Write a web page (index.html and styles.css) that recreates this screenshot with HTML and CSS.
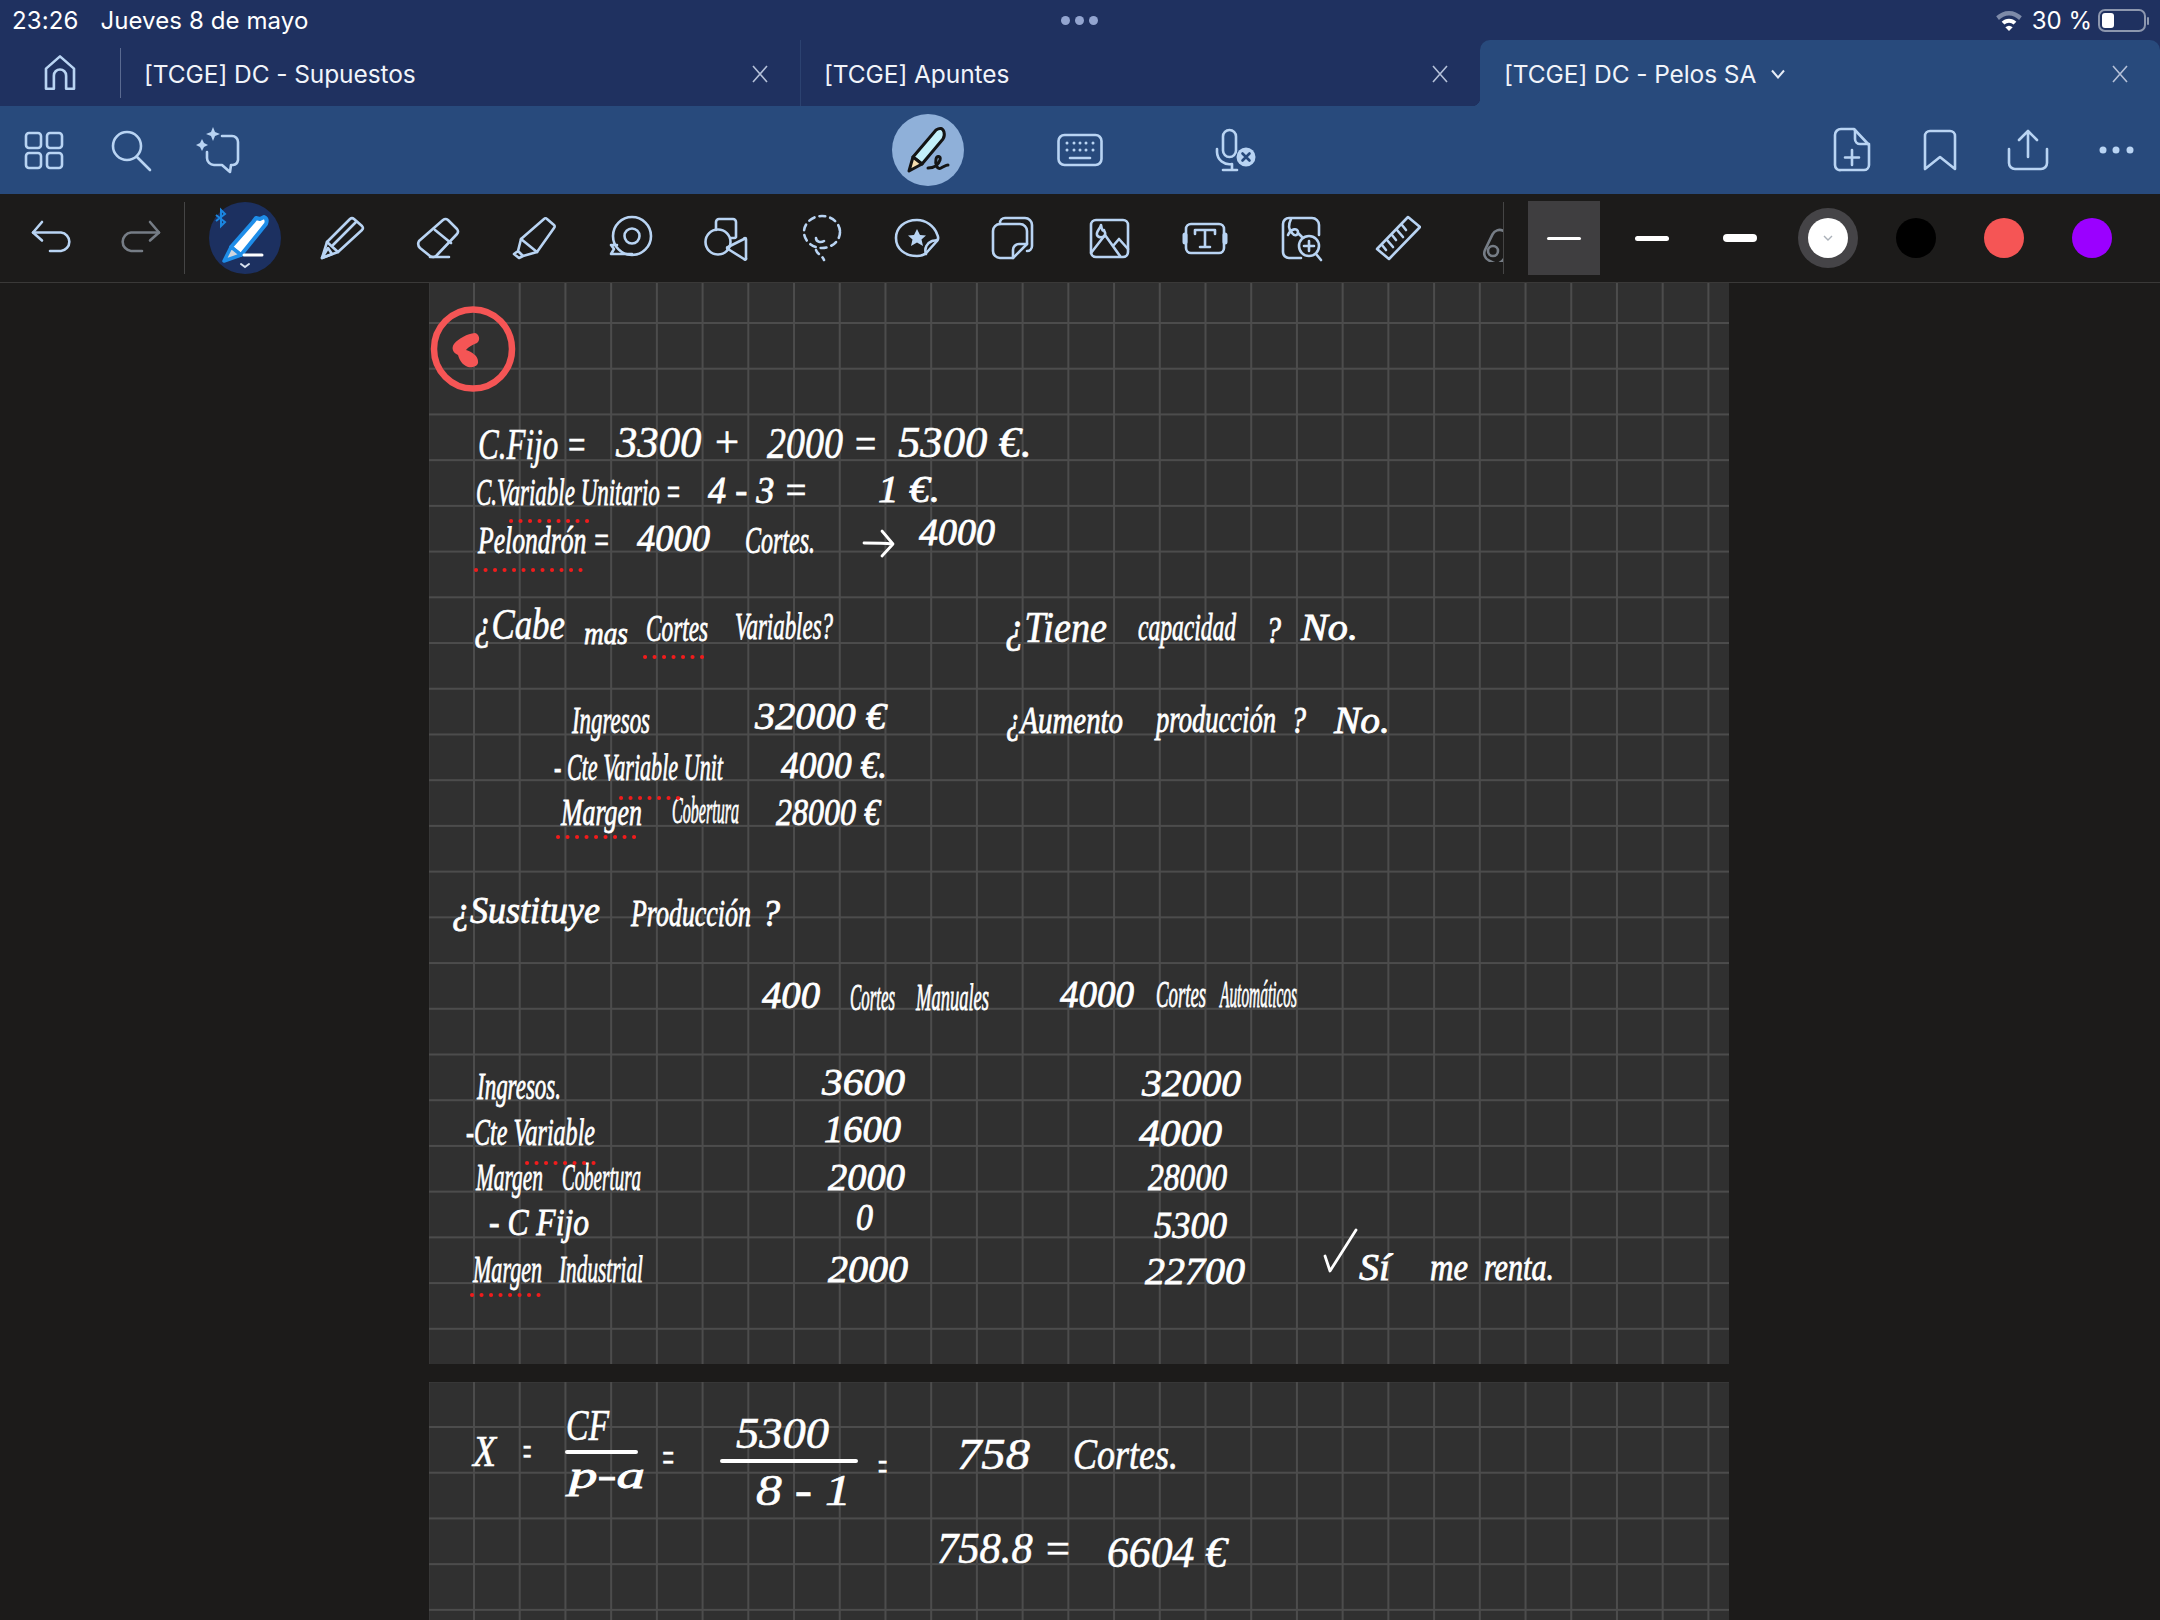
FILE: index.html
```html
<!DOCTYPE html>
<html lang="es">
<head>
<meta charset="utf-8">
<title>[TCGE] DC - Pelos SA</title>
<link rel="stylesheet" href="styles.css">
</head>
<body>
<div class="app">
  <header class="status">
    <div class="status-left"><span>23:26</span><span>Jueves 8 de mayo</span></div>
    <div class="status-dots"><i></i><i></i><i></i></div>
    <div class="status-right">
      <svg class="wifi" viewBox="0 0 30 24"><path class="wifi-dim" d="M1 8a20 20 0 0 1 28 0l-3 4a15 15 0 0 0-22 0z"/><path d="M7 14a11 11 0 0 1 16 0l-3 3a7 7 0 0 0-10 0z"/><path d="M15 24l-4-4a6 6 0 0 1 8 0z"/></svg>
      <span>30 %</span>
      <div class="battery"><div class="battery-fill"></div></div>
    </div>
  </header>

  <nav class="tabs">
    <div class="home">
      <svg class="ic home-ic" viewBox="0 0 48 48"><path d="M8 42V19L24 5l16 14v23h-9V27a7 7 0 0 0-14 0v15z"/></svg>
    </div>
    <div class="tab tab-first"><span class="tab-title">[TCGE] DC - Supuestos</span>
      <svg class="close" viewBox="0 0 16 20"><path d="M1 2l14 16M15 2L1 18"/></svg></div>
    <div class="tab tab-second"><span class="tab-title">[TCGE] Apuntes</span>
      <svg class="close" viewBox="0 0 16 20"><path d="M1 2l14 16M15 2L1 18"/></svg></div>
    <div class="tab tab-active"><span class="tab-title">[TCGE] DC - Pelos SA</span>
      <svg class="caret" viewBox="0 0 16 10"><path d="M2 1.5l6 7 6-7"/></svg>
      <svg class="close" viewBox="0 0 16 20"><path d="M1 2l14 16M15 2L1 18"/></svg></div>
  </nav>

  <section class="toolbar">
    <div class="tb-group">
      <div class="cell"><svg class="ic" viewBox="0 0 48 48"><rect x="6" y="7" width="15" height="15" rx="3"/><rect x="27" y="7" width="15" height="15" rx="3"/><rect x="6" y="27" width="15" height="15" rx="3"/><rect x="27" y="27" width="15" height="15" rx="3"/></svg></div>
      <div class="cell"><svg class="ic" viewBox="0 0 48 48"><circle cx="19" cy="20" r="14"/><path d="M29 31l13 13"/></svg></div>
      <div class="cell"><svg class="ic" viewBox="0 0 48 48"><path d="M26 10h10a6 6 0 0 1 6 6v18a6 6 0 0 1-5 5h-2l-1 7-8-7h-8a7 7 0 0 1-7-7v-6"/><path class="solid" d="M17 1l2 5 5 2-5 2-2 5-2-5-5-2 5-2zM6 13l2 4 4 2-4 2-2 4-2-4-4-2 4-2z"/></svg></div>
    </div>
    <div class="tb-center">
      <div class="cell-wide cell-pen"><div class="mode-pen">
        <svg class="pen-art" viewBox="0 0 72 72"><path class="pen-body" d="M44 16q6-4 8 2 1 4-1 7L30 50l-9-7z"/><path class="pen-tip" d="M21 43l-4 14 13-7z"/><path class="pen-scrib" d="M36 54c5 0 10-2 12-8 1-4-3-5-4-1-1 5 1 11 5 9s5-3 7-3"/></svg>
      </div></div>
      <div class="cell-wide"><svg class="ic" viewBox="0 0 48 48"><rect x="2.500" y="9" width="43" height="30" rx="6"/><path class="dots" d="M11 17h.01M18 17h.01M24 17h.01M30 17h.01M37 17h.01M11 24h.01M18 24h.01M24 24h.01M30 24h.01M37 24h.01"/><path d="M14 32h20"/></svg></div>
      <div class="cell-wide"><svg class="ic" viewBox="0 0 48 48"><rect x="11" y="4" width="13" height="27" rx="6.500"/><path d="M5 23v3a12.500 12.500 0 0 0 15 12v5"/><path d="M11 44h14"/><circle class="solid" cx="34" cy="31" r="9.500"/><path class="x-mark" d="M30.500 27.500l7 7M37.500 27.500l-7 7"/></svg></div>
    </div>
    <div class="tb-group tb-right">
      <div class="cell"><svg class="ic" viewBox="0 0 48 48"><path d="M13 3h13l15 16v20a5 5 0 0 1-5 5H13a5 5 0 0 1-6-5V9a6 6 0 0 1 6-6z"/><path d="M27 4v9a5 5 0 0 0 5 5h9"/><path d="M24 24v15M17 31.500h14"/></svg></div>
      <div class="cell"><svg class="ic" viewBox="0 0 48 48"><path d="M9 43V10a5 5 0 0 1 5-5h20a5 5 0 0 1 5 5v33L24 31z"/></svg></div>
      <div class="cell"><svg class="ic" viewBox="0 0 48 48"><path d="M24 31V6M15 14l9-9 9 9"/><path d="M5 23v14a6 6 0 0 0 6 6h26a6 6 0 0 0 6-6V23"/></svg></div>
      <div class="cell"><svg class="ic more" viewBox="0 0 48 48"><circle class="solid" cx="11" cy="24" r="3.500"/><circle class="solid" cx="24" cy="24" r="3.500"/><circle class="solid" cx="38" cy="24" r="3.500"/></svg></div>
    </div>
  </section>

  <section class="tools">
    <div class="cell"><svg class="ic" viewBox="0 0 48 48"><path d="M14 8L5 18.500l9 8"/><path d="M5 18.500h28a9.300 9.300 0 0 1 0 18.500H22"/></svg></div>
    <div class="cell"><svg class="ic ic-dim" viewBox="0 0 48 48"><path d="M34 8l9 10.500-9 8"/><path d="M43 18.500H15a9.300 9.300 0 0 0 0 18.500h11"/></svg></div>
    <div class="vline"></div>
    <div class="tool-strip">
      <div class="tool"><div class="pen-active">
        <svg class="pen-art" viewBox="0 0 72 72">
          <path class="bt" d="M7 13l9 7-4 4V8l4 4-9 7"/>
          <path class="blue-body" d="M44 20l3-4 4 1 4-2q4 2 2 7L32 53l-10-8z"/>
          <path class="blue-tip" d="M22 45l-7 14 17-6z"/>
          <path class="white-dash" d="M35 53h18"/>
          <path class="white-chev" d="M32 62l4 3 4-3"/>
        </svg>
      </div></div>
      <div class="tool"><svg class="ic" viewBox="0 0 48 48"><path d="M5 44l5-16L33 5a3 3 0 0 1 4 0l8 7a3 3 0 0 1 0 4L21 38z"/><path d="M10 28l11 10M16 31L39 8M5 44l6-10 4 6z"/></svg></div>
      <div class="tool"><svg class="ic" viewBox="0 0 48 48"><path d="M30 6a4 4 0 0 1 5 0l9 9a4 4 0 0 1 0 5L24 41a5 5 0 0 1-7 1l-10-8a6 6 0 0 1-1-7z"/><path d="M22 16l16 13M17 43h19"/></svg></div>
      <div class="tool"><svg class="ic" viewBox="0 0 48 48"><path d="M12 25L35 5a2 2 0 0 1 3 0l7 6a2 2 0 0 1 0 3L28 38z"/><path d="M12 25l-3 12 5 5 14-4M9 37l-4 3 5 4 4-2"/></svg></div>
      <div class="tool"><svg class="ic" viewBox="0 0 48 48"><circle cx="27" cy="22" r="19"/><circle cx="27" cy="22" r="7.500"/><path d="M12 31H6l3 4-3 5h21"/></svg></div>
      <div class="tool"><svg class="ic" viewBox="0 0 48 48"><path d="M15 16V8a3 3 0 0 1 3-3h14a3 3 0 0 1 3 3v15a2 2 0 0 1-2 1h-3"/><circle cx="17" cy="28" r="12.500"/><path d="M45 25v19a1 1 0 0 1-2 1L27 35a1 1 0 0 1 0-2l16-8a1 1 0 0 1 2 0z"/></svg></div>
      <div class="tool"><svg class="ic" viewBox="0 0 48 48"><ellipse class="dash" cx="25" cy="18" rx="18" ry="16"/><path d="M19 24c0 4 5 5 8 3"/><path class="dash-sm" d="M19 36c1 4 6 5 8 10"/></svg></div>
      <div class="tool"><svg class="ic" viewBox="0 0 48 48"><path d="M24 6C11 6 3 14 3 24c0 11 9 18 21 18 4 0 8-1 11-5l9-10c2-2 1-5 0-7-3-8-11-14-20-14z"/><path d="M33 40c-2-6 1-11 6-13 2-1 4 0 5-1"/><path class="solid" d="M24 15l3 6 6 .5-4.500 4 1.500 6.500-6-3.500-6 3.500 1.500-6.500-4.500-4 6-.5z"/></svg></div>
      <div class="tool"><svg class="ic" viewBox="0 0 48 48"><path d="M4 17a7 7 0 0 1 7-7h20a7 7 0 0 1 7 7v13L24 44H11a7 7 0 0 1-7-7z"/><path d="M24 44v-8a6 6 0 0 1 6-6h8"/><path d="M11 10V9a5 5 0 0 1 5-5h20a7 7 0 0 1 7 7v21a5 5 0 0 1-5 5"/></svg></div>
      <div class="tool"><svg class="ic" viewBox="0 0 48 48"><rect x="6" y="6" width="37" height="37" rx="5"/><path d="M6 39l14-18 15 21M28 32l6-7 9 10"/><path d="M16 11c-1 4-5 6-4 10 1 3 7 3 8 0 1-3-1-3-1-5-1 1-2 1-3-5z"/></svg></div>
      <div class="tool"><svg class="ic" viewBox="0 0 48 48"><rect x="5" y="10" width="38" height="29" rx="5"/><path d="M14 20v-4h20v4M24 16v17M19 33h10"/><path class="pill" d="M4 21v7M44 21v7"/></svg></div>
      <div class="tool"><svg class="ic" viewBox="0 0 48 48"><path d="M42 21V11a7 7 0 0 0-7-7H12a6 6 0 0 0-6 6v28a6 6 0 0 0 6 6h12"/><path d="M14 5c-3 6-2 11 1 14 3 4 6 2 6-1 0-4-7-4-10 3M21 19l4 4"/><circle cx="32" cy="32" r="10"/><path d="M32 27v10M27 32h10M39 40l5 6"/></svg></div>
      <div class="tool"><svg class="ic" viewBox="0 0 48 48"><path d="M35 3l12 10-31 32-12-10z"/><path d="M29 11l4 5M24 16l6 7M19 21l4 5M14 26l6 7M9 31l4 5"/></svg></div>
      <div class="tool"><svg class="ic ic-dim" viewBox="0 0 48 48"><rect x="19" y="16" width="21" height="33" rx="8" transform="rotate(26 29 32)"/><circle cx="24" cy="37" r="5"/><path d="M44 15h.01M46 9h.01"/></svg></div>
    </div>
    <div class="vline"></div>
    <div class="sizes">
      <div class="swatch swatch-on"><span class="stroke s1"></span></div>
      <div class="swatch"><span class="stroke s2"></span></div>
      <div class="swatch"><span class="stroke s3"></span></div>
      <div class="swatch"><div class="ring"><div class="dot dot-white"><svg class="chev" viewBox="0 0 12 8"><path d="M2 2l4 4 4-4"/></svg></div></div></div>
      <div class="swatch"><div class="dot dot-black"></div></div>
      <div class="swatch"><div class="dot dot-red"></div></div>
      <div class="swatch"><div class="dot dot-purple"></div></div>
    </div>
  </section>

  <main class="doc">
    <article class="page page-one">
      <svg class="ink" viewBox="429 283 1300 1081">
        <ellipse class="red-ring" cx="473" cy="349" rx="39" ry="39.500"/>
        <path class="red-blob" d="M475 333c4 1 6 7 2 10-5 2-9 4-11 7 6 2 12 6 12 11 1 5-5 7-10 6-6-2-9-8-10-12-5-2-7-7-4-11 5-6 13-10 21-11z"/>

        <g class="hw xl">
          <text x="478" y="459" textLength="109" lengthAdjust="spacingAndGlyphs">C.Fijo =</text>
          <text x="616" y="457" textLength="125" lengthAdjust="spacingAndGlyphs">3300 +</text>
          <text x="767" y="458" textLength="111" lengthAdjust="spacingAndGlyphs">2000 =</text>
          <text x="898" y="457" textLength="134" lengthAdjust="spacingAndGlyphs">5300 €.</text>
          <text x="474" y="639" textLength="91" lengthAdjust="spacingAndGlyphs">¿Cabe</text>
          <text x="1005" y="642" textLength="102" lengthAdjust="spacingAndGlyphs">¿Tiene</text>
        </g>
        <g class="hw lg">
          <text x="476" y="505" textLength="205" lengthAdjust="spacingAndGlyphs">C.Variable Unitario =</text>
          <text x="708" y="503" textLength="100" lengthAdjust="spacingAndGlyphs">4 - 3 =</text>
          <text x="878" y="502" textLength="62" lengthAdjust="spacingAndGlyphs">1 €.</text>
          <text x="478" y="553" textLength="132" lengthAdjust="spacingAndGlyphs">Pelondrón =</text>
          <text x="637" y="551" textLength="73" lengthAdjust="spacingAndGlyphs">4000</text>
          <text x="745" y="553" textLength="70" lengthAdjust="spacingAndGlyphs">Cortes.</text>
          <text x="919" y="545" textLength="76" lengthAdjust="spacingAndGlyphs">4000</text>
          <text x="646" y="641" textLength="62" lengthAdjust="spacingAndGlyphs">Cortes</text>
          <text x="735" y="639" textLength="98" lengthAdjust="spacingAndGlyphs">Variables?</text>
          <text x="1138" y="640" textLength="98" lengthAdjust="spacingAndGlyphs">capacidad</text>
          <text x="1266" y="643" textLength="15" lengthAdjust="spacingAndGlyphs">?</text>
          <text x="1301" y="640" textLength="57" lengthAdjust="spacingAndGlyphs">No.</text>
          <text x="1006" y="733" textLength="117" lengthAdjust="spacingAndGlyphs">¿Aumento</text>
          <text x="1156" y="732" textLength="120" lengthAdjust="spacingAndGlyphs">producción</text>
          <text x="1291" y="733" textLength="15" lengthAdjust="spacingAndGlyphs">?</text>
          <text x="1334" y="733" textLength="56" lengthAdjust="spacingAndGlyphs">No.</text>
          <text x="572" y="733" textLength="78" lengthAdjust="spacingAndGlyphs">Ingresos</text>
          <text x="755" y="729" textLength="131" lengthAdjust="spacingAndGlyphs">32000 €</text>
          <text x="554" y="780" textLength="169" lengthAdjust="spacingAndGlyphs">- Cte Variable Unit</text>
          <text x="781" y="778" textLength="106" lengthAdjust="spacingAndGlyphs">4000 €.</text>
          <text x="561" y="825" textLength="81" lengthAdjust="spacingAndGlyphs">Margen</text>
          <text x="672" y="823" textLength="67" lengthAdjust="spacingAndGlyphs">Cobertura</text>
          <text x="776" y="825" textLength="104" lengthAdjust="spacingAndGlyphs">28000 €</text>
          <text x="452" y="923" textLength="148" lengthAdjust="spacingAndGlyphs">¿Sustituye</text>
          <text x="631" y="926" textLength="120" lengthAdjust="spacingAndGlyphs">Producción</text>
          <text x="762" y="926" textLength="18" lengthAdjust="spacingAndGlyphs">?</text>
          <text x="762" y="1008" textLength="58" lengthAdjust="spacingAndGlyphs">400</text>
          <text x="850" y="1010" textLength="45" lengthAdjust="spacingAndGlyphs">Cortes</text>
          <text x="916" y="1010" textLength="73" lengthAdjust="spacingAndGlyphs">Manuales</text>
          <text x="1060" y="1007" textLength="74" lengthAdjust="spacingAndGlyphs">4000</text>
          <text x="1156" y="1007" textLength="50" lengthAdjust="spacingAndGlyphs">Cortes</text>
          <text x="1220" y="1007" textLength="77" lengthAdjust="spacingAndGlyphs">Automáticos</text>
          <text x="477" y="1099" textLength="84" lengthAdjust="spacingAndGlyphs">Ingresos.</text>
          <text x="822" y="1095" textLength="83" lengthAdjust="spacingAndGlyphs">3600</text>
          <text x="1142" y="1096" textLength="99" lengthAdjust="spacingAndGlyphs">32000</text>
          <text x="466" y="1145" textLength="129" lengthAdjust="spacingAndGlyphs">-Cte Variable</text>
          <text x="824" y="1142" textLength="77" lengthAdjust="spacingAndGlyphs">1600</text>
          <text x="1139" y="1146" textLength="83" lengthAdjust="spacingAndGlyphs">4000</text>
          <text x="476" y="1190" textLength="67" lengthAdjust="spacingAndGlyphs">Margen</text>
          <text x="562" y="1190" textLength="79" lengthAdjust="spacingAndGlyphs">Cobertura</text>
          <text x="828" y="1190" textLength="77" lengthAdjust="spacingAndGlyphs">2000</text>
          <text x="1148" y="1190" textLength="79" lengthAdjust="spacingAndGlyphs">28000</text>
          <text x="489" y="1235" textLength="100" lengthAdjust="spacingAndGlyphs">- C Fijo</text>
          <text x="856" y="1230" textLength="17" lengthAdjust="spacingAndGlyphs">0</text>
          <text x="1154" y="1238" textLength="73" lengthAdjust="spacingAndGlyphs">5300</text>
          <text x="473" y="1282" textLength="69" lengthAdjust="spacingAndGlyphs">Margen</text>
          <text x="559" y="1282" textLength="84" lengthAdjust="spacingAndGlyphs">Industrial</text>
          <text x="828" y="1282" textLength="80" lengthAdjust="spacingAndGlyphs">2000</text>
          <text x="1145" y="1284" textLength="100" lengthAdjust="spacingAndGlyphs">22700</text>
          <text x="1359" y="1280" textLength="31" lengthAdjust="spacingAndGlyphs">Sí</text>
          <text x="1430" y="1280" textLength="38" lengthAdjust="spacingAndGlyphs">me</text>
          <text x="1484" y="1280" textLength="70" lengthAdjust="spacingAndGlyphs">renta.</text>
        </g>
        <g class="hw md">
          <text x="584" y="644" textLength="44" lengthAdjust="spacingAndGlyphs">mas</text>
        </g>
        <path class="pen-line" d="M864 543c10 0 20 0 28 1M882 531l11 13-11 12"/>
        <path class="pen-line" d="M1325 1256l5 15 26-41"/>
        <path class="red-dots" d="M511 521H590M476 570H583M645 657H704M621 798H681M558 837H636M527 1163H596M472 1295H540"/>
      </svg>
    </article>
    <article class="page page-two">
      <svg class="ink" viewBox="429 1382 1300 238">
        <g class="hw xl">
          <text x="473" y="1466" textLength="23" lengthAdjust="spacingAndGlyphs">X</text>
          <text x="522" y="1466" textLength="10" lengthAdjust="spacingAndGlyphs">=</text>
          <text x="566" y="1440" textLength="43" lengthAdjust="spacingAndGlyphs">CF</text>
          <text x="661" y="1472" textLength="14" lengthAdjust="spacingAndGlyphs">=</text>
          <text x="736" y="1448" textLength="93" lengthAdjust="spacingAndGlyphs">5300</text>
          <text x="756" y="1505" textLength="95" lengthAdjust="spacingAndGlyphs">8 - 1</text>
          <text x="877" y="1481" textLength="11" lengthAdjust="spacingAndGlyphs">=</text>
          <text x="957" y="1469" textLength="73" lengthAdjust="spacingAndGlyphs">758</text>
          <text x="1073" y="1469" textLength="105" lengthAdjust="spacingAndGlyphs">Cortes.</text>
          <text x="937" y="1563" textLength="135" lengthAdjust="spacingAndGlyphs">758.8 =</text>
          <text x="1107" y="1567" textLength="120" lengthAdjust="spacingAndGlyphs">6604 €</text>
        </g>
        <g class="hw lg">
          <text x="569" y="1488" textLength="76" lengthAdjust="spacingAndGlyphs">p-a</text>
        </g>
        <path class="pen-bar" d="M567 1452H636M722 1461H856"/>
      </svg>
    </article>
  </main>
</div>
</body>
</html>
```
FILE: styles.css
```css
* { box-sizing: border-box; }
html, body { margin: 0; padding: 0; }
body { width: 2160px; height: 1620px; overflow: hidden; background: #1c1b1a; font-family: Inter, "Liberation Sans", sans-serif; color: #fff; }
.app { width: 2160px; height: 1620px; display: flex; flex-direction: column; overflow: hidden; }

/* status bar */
.status { height: 40px; flex: none; background: #1f3160; display: grid; grid-template-columns: 1fr auto 1fr; align-items: center; padding: 0 14px 0 12px; font-size: 24px; }
.status-left { display: flex; gap: 22px; letter-spacing: .1px; }
.status-dots { display: flex; gap: 5px; }
.status-dots i { width: 9px; height: 9px; border-radius: 50%; background: #93a5d0; }
.status-right { display: flex; justify-content: flex-end; align-items: center; gap: 6px; }
.wifi { width: 30px; height: 22px; fill: #fff; margin-right: 2px; }
.wifi-dim { fill: #7d8aa8; }
.battery { width: 48px; height: 23px; border: 2px solid #8d97ae; border-radius: 7px; padding: 2px; position: relative; }
.battery::after { content: ""; position: absolute; right: -5px; top: 6px; width: 2px; height: 8px; background: #8d97ae; border-radius: 1px; }
.battery-fill { width: 12px; height: 100%; background: #fff; border-radius: 3px; }

/* shared icon */
.ic { width: 48px; height: 48px; fill: none; stroke: #b9d4f3; stroke-width: 2.600; stroke-linecap: round; stroke-linejoin: round; flex: none; }
.ic .solid { fill: #b9d4f3; stroke: none; }
.ic .dots { stroke-width: 3; }
.ic .x-mark { stroke: #284a7c; stroke-width: 2.600; }
.ic .pill { stroke-width: 5; }
.ic .dash { stroke-dasharray: 6 5; }
.ic .dash-sm { stroke-dasharray: 5 5; }
.ic-dim { stroke: #767d86; }

/* tabs */
.tabs { height: 66px; flex: none; background: #1f3160; display: flex; }
.home { width: 120px; display: flex; align-items: center; justify-content: center; }
.ic.home-ic { width: 42px; height: 42px; stroke-width: 3; }
.tab { width: 680px; height: 66px; display: flex; align-items: center; padding: 2px 32px 0 24px; position: relative; font-size: 24.500px; letter-spacing: -.1px; color: #f1f4fa; }
.tab-title { white-space: nowrap; }
.close { width: 16px; height: 20px; margin-left: auto; fill: none; stroke: #b4c0d8; stroke-width: 1.600; }
.caret { width: 16px; height: 10px; margin-left: 14px; fill: none; stroke: #e6ecf6; stroke-width: 2; }
.tab-first::before { content: ""; position: absolute; left: 0; top: 8px; bottom: 8px; width: 1px; background: #5a6a90; }
.tab-second { border-left: 1px solid #2c4270; padding-left: 23px; }
.tab-active { background: #284a7c; border-radius: 10px 10px 0 0; }
.tab-active::before { content: ""; position: absolute; left: -8px; bottom: 0; width: 8px; height: 8px; background: radial-gradient(circle at 0 0, #1f3160 8px, #284a7c 8.500px); }

/* toolbar */
.toolbar { height: 88px; flex: none; background: #284a7c; display: grid; grid-template-columns: 1fr auto 1fr; align-items: center; }
.tb-group { display: flex; }
.tb-right { justify-content: flex-end; }
.tb-center { display: flex; }
.cell { width: 88px; height: 88px; flex: none; display: flex; align-items: center; justify-content: center; }
.cell-wide { width: 156px; height: 88px; display: flex; align-items: center; justify-content: center; }
.cell-pen { padding-left: 8px; }
.mode-pen { width: 72px; height: 72px; border-radius: 50%; background: #8fb0d9; flex: none; }
.pen-art { width: 72px; height: 72px; display: block; }
.pen-body { fill: #c4f0fa; stroke: #141414; stroke-width: 3; stroke-linejoin: round; }
.pen-tip { fill: #f5deb0; stroke: #141414; stroke-width: 3; stroke-linejoin: round; }
.pen-scrib { fill: none; stroke: #141414; stroke-width: 3; stroke-linecap: round; }

/* tool row */
.tools { height: 89px; flex: none; background: #1c1b1a; border-bottom: 1px solid #3a3938; display: flex; align-items: center; padding-left: 8px; }
.vline { width: 1px; height: 72px; background: #454545; flex: none; }
.tool-strip { display: flex; width: 1306px; margin-left: 12px; overflow: hidden; flex: none; }
.tool { width: 96px; height: 72px; flex: none; display: flex; align-items: center; justify-content: center; }
.pen-active { width: 72px; height: 72px; border-radius: 50%; background: #1c3060; flex: none; }
.bt { fill: none; stroke: #1b86e0; stroke-width: 2; }
.blue-body { fill: #fff; stroke: #1e8de8; stroke-width: 4; stroke-linejoin: round; }
.blue-tip { fill: #cfd6de; stroke: #1e8de8; stroke-width: 3.500; stroke-linejoin: round; }
.white-dash { stroke: #fff; stroke-width: 3; stroke-linecap: round; }
.white-chev { fill: none; stroke: #d8e2f0; stroke-width: 2; stroke-linecap: round; }
.sizes { display: flex; margin-left: 16px; }
.swatch { width: 88px; height: 74px; display: flex; align-items: center; justify-content: center; }
.swatch-on { background: linear-gradient(#3f3e40, #3f3e40) center / 72px 74px no-repeat; }
.stroke { width: 34px; background: #fff; border-radius: 4px; display: block; }
.s1 { height: 3px; }
.s2 { height: 5px; }
.s3 { height: 8px; }
.ring { width: 60px; height: 60px; border-radius: 50%; background: #454447; display: flex; align-items: center; justify-content: center; }
.dot { width: 40px; height: 40px; border-radius: 50%; display: flex; align-items: center; justify-content: center; }
.dot-white { background: #fff; }
.dot-black { background: #000; }
.dot-red { background: #f55555; }
.dot-purple { background: #9b00ff; }
.chev { width: 12px; height: 8px; fill: none; stroke: #aab0b8; stroke-width: 1.400; }

/* document */
.doc { flex: 1; min-height: 0; overflow: hidden; display: flex; flex-direction: column; gap: 18px; padding-left: 429px; }
.page { width: 1300px; flex: none; position: relative; background-color: #303030;
  background-image: linear-gradient(#4c4c4c 2px, transparent 2px), linear-gradient(90deg, #4c4c4c 2px, transparent 2px);
  background-size: 45.730px 45.730px; }
.page-one { height: 1081px; background-position: 44px 39px; }
.page-two { height: 238px; background-position: 44px 44px; }
.ink { position: absolute; left: 0; top: 0; width: 100%; height: 100%; display: block; overflow: hidden; }
.red-ring { fill: none; stroke: #f55555; stroke-width: 6.500; }
.red-blob { fill: #f55555; }
.hw { font-family: "Liberation Serif", serif; font-style: italic; fill: #fff; stroke: #fff; }
.xl { font-size: 44px; stroke-width: .6px; }
.lg { font-size: 38px; stroke-width: .8px; }
.md { font-size: 32px; stroke-width: .8px; }
.pen-line { fill: none; stroke: #fff; stroke-width: 2.800; stroke-linecap: round; stroke-linejoin: round; }
.pen-bar { fill: none; stroke: #fff; stroke-width: 4; stroke-linecap: round; }
.red-dots { fill: none; stroke: #f01c1c; stroke-width: 4; stroke-linecap: round; stroke-dasharray: .1 9.400; }
```
